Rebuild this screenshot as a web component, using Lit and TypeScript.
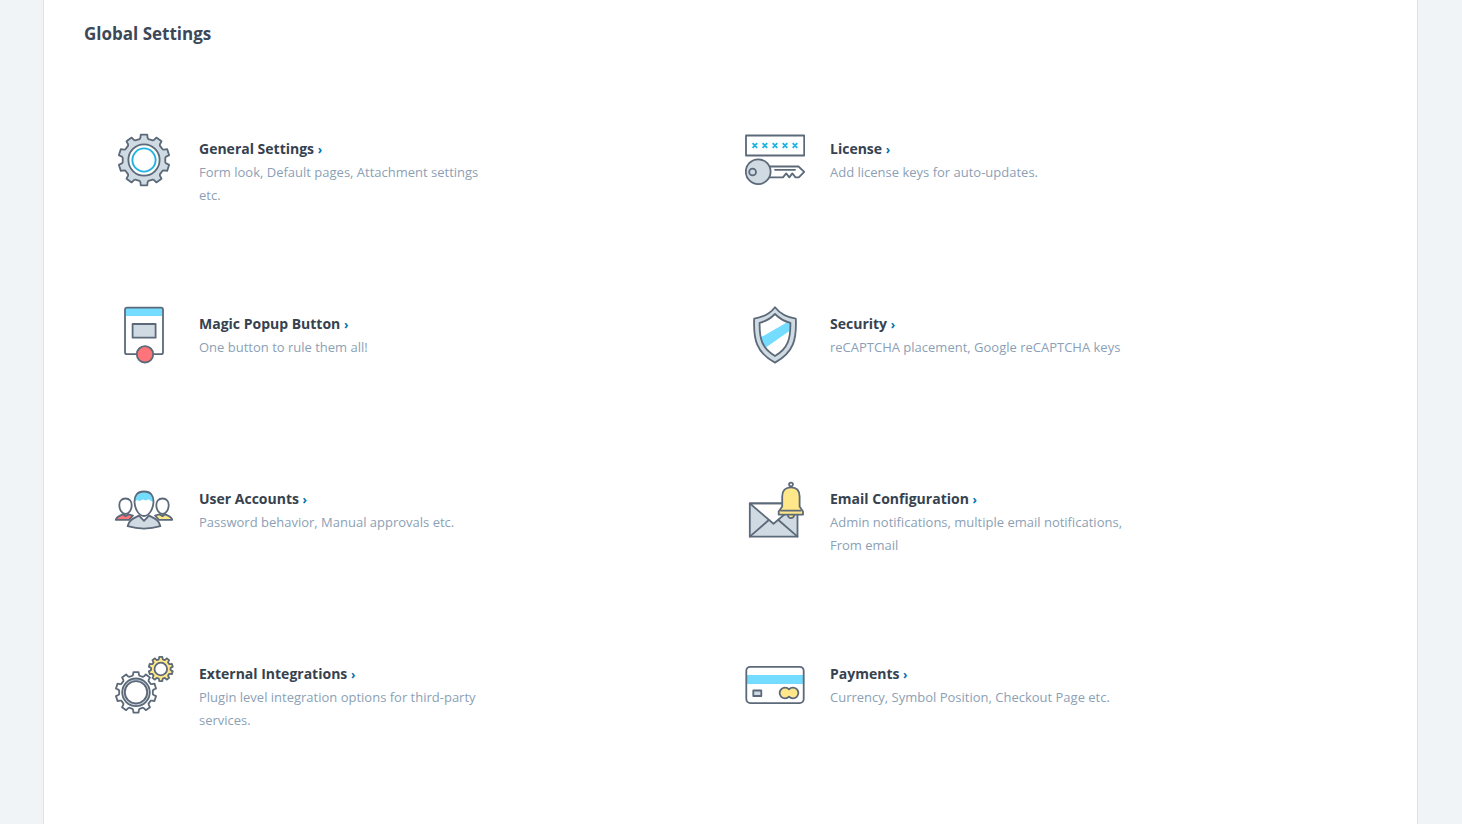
import { LitElement, html, svg, css } from "lit";
import { customElement } from "lit/decorators.js";

/** Outline of a cog with straight-sided teeth. */
function cog(cx: number, cy: number, outer: number, root: number, teeth = 10): string {
  const step = (Math.PI * 2) / teeth;
  const pts: string[] = [];
  for (let i = 0; i < teeth; i++) {
    const a = i * step - Math.PI / 2;
    const corners: [number, number][] = [
      [root, -0.33],
      [root + 1, -0.26],
      [outer, -0.2],
      [outer, 0.2],
      [root + 1, 0.26],
      [root, 0.33],
    ];
    for (const [r, f] of corners) {
      const t = a + f * step;
      pts.push(`${(cx + r * Math.cos(t)).toFixed(2)} ${(cy + r * Math.sin(t)).toFixed(2)}`);
    }
  }
  return `M${pts.join("L")}Z`;
}

const icons = {
  general: svg`
    <path class="ln grey" d=${cog(30, 30, 25.6, 21.4)} />
    <circle class="ln white" cx="30" cy="30" r="15.6" />
    <circle class="cyan-ln" cx="30" cy="30" r="11.6" />`,
  license: svg`
    <path class="ln white" d="M1 5.5H59.2V25.5H1Z" />
    <path class="cyan-ln" d="M7.6 13.2l4.6 4.6m0-4.6l-4.6 4.6M17.6 13.2l4.6 4.6m0-4.6l-4.6 4.6M27.7 13.2l4.6 4.6m0-4.6l-4.6 4.6M37.7 13.2l4.6 4.6m0-4.6l-4.6 4.6M47.7 13.2l4.6 4.6m0-4.6l-4.6 4.6" />
    <path class="ln white" d="M25 36.5H53.5L59.2 41.8L53.8 47.4H50.5L47.3 43.4L44.3 47.4L41.2 43.4L38 47.4H25" />
    <path class="ln" d="M30 39.8H50" />
    <circle class="ln grey" cx="13.2" cy="41.7" r="12.4" />
    <circle class="ln" cx="7.6" cy="42" r="3.4" />`,
  popup: svg`
    <rect class="white" x="11" y="2.6" width="38" height="46.6" rx="2" />
    <path class="cyan" d="M12 3H48V11H12Z" />
    <rect class="ln" x="11" y="2.6" width="38" height="46.6" rx="2" />
    <path class="ln grey" d="M18.6 19H41.6V32.7H18.6Z" />
    <circle class="ln red" cx="31" cy="49.3" r="8.2" />`,
  security: svg`
    <path class="ln grey" d="M30 2.2C25.500 8 18 12.300 9.200 13.600C8.300 34 11 47.500 30 57.600C49 47.500 51.700 34 50.800 13.600C42 12.300 34.500 8 30 2.200Z" />
    <path class="white" d="M30 9C26 13 20.500 16.500 14.600 17.800C14.400 34 17 43.500 30 51C43 43.500 45.600 34 45.400 17.800C39.500 16.500 34 13 30 9Z" />
    <path class="cyan" d="M15.400 32.600L42.500 17L45.400 17.800L45.200 25.500L20.800 42.400C17.500 39 16 36 15.400 32.600Z" />
    <path class="ln" d="M30 9C26 13 20.500 16.500 14.600 17.800C14.400 34 17 43.500 30 51C43 43.500 45.600 34 45.400 17.800C39.500 16.500 34 13 30 9Z" />`,
  users: svg`
    <path class="ln red" d="M1.800 39.800C2.500 36.500 6 35.600 9 34.300L11.500 36.200L14.500 34.300L19 35.500L15 39.800Z" />
    <path class="ln yellow" d="M58.200 39.800C57.500 36.500 54 35.600 51 34.300L48.500 36.200L45.500 34.300L41 35.500L45 39.800Z" />
    <path class="ln white" d="M11.500 18.500C7.300 18.500 5.200 21.500 5.300 25.200C5.400 29.500 8 34 11.500 34S17.600 29.500 17.700 25.200C17.800 21.500 15.700 18.500 11.500 18.500Z" />
    <path class="ln white" d="M48.500 18.500C44.300 18.500 42.200 21.500 42.300 25.200C42.400 29.500 45 34 48.500 34S54.600 29.500 54.700 25.200C54.800 21.500 52.700 18.500 48.500 18.500Z" />
    <path class="ln grey" d="M13.600 46.200C15 39.500 20 38.300 25 35.600L30 40.800L35 35.600C40 38.300 45 39.500 46.400 46.200Q30 51 13.600 46.200Z" />
    <path class="white" d="M30 11.500C23 11.500 20.300 16 20.500 22C20.700 29 25 36 30 36S39.300 29 39.500 22C39.700 16 37 11.500 30 11.500Z" />
    <path class="cyan" d="M30 11.500C24 11.500 20.500 15.500 20.600 21.800L23 20L25.500 21L29 19.600L32 20.400L34.500 19.300L37 21L39.400 22C39.600 15.500 36 11.500 30 11.500Z" />
    <path class="ln" d="M30 11.500C23 11.500 20.300 16 20.500 22C20.700 29 25 36 30 36S39.300 29 39.500 22C39.700 16 37 11.500 30 11.500Z" />`,
  email: svg`
    <path class="grey" d="M4.800 23.400H52.500V56.600H4.800Z" />
    <path class="ln white" d="M4.800 23.400H52.500L28.500 43.800Z" />
    <path class="ln" d="M4.800 56.600L23.800 40M52.500 56.600L33.400 40" />
    <path class="ln" d="M4.800 23.400H52.500V56.600H4.800Z" />
    <path class="ln yellow" d="M42.800 34.500a3.200 3.700 0 0 0 6.400 0" />
    <circle class="ln white" cx="46" cy="4.600" r="1.900" />
    <path class="ln yellow" d="M33.700 34.600V31.600L37.200 26.500V16.500C37.200 10.500 40.500 7.300 46 7.300S54.600 10.500 54.600 16.500V26.500L58 31.600V34.600Z" />
    <path class="ln" d="M36 30.700H55.500" />`,
  external: svg`
    <path class="ln white" d=${cog(22, 37.300, 20.400, 16.900)} />
    <circle class="ln grey" cx="22" cy="37.300" r="13.800" />
    <circle class="ln white" cx="22" cy="37.300" r="11.200" />
    <path class="ln yellow" d=${cog(46.800, 14, 12.200, 9.800)} />
    <circle class="ln white" cx="46.800" cy="14" r="6.300" />`,
  payments: svg`
    <rect class="white" x="1.300" y="11.800" width="57.400" height="36.300" rx="4" />
    <path class="cyan" d="M2 20H58V29H2Z" />
    <rect class="ln" x="1.300" y="11.800" width="57.400" height="36.300" rx="4" />
    <path class="ln grey" d="M8.300 35.500H16.300V41H8.300Z" />
    <path class="ln yellow" d="M44 34.300a5.400 5.400 0 1 0 0 7.400a5.400 5.400 0 1 0 0 -7.400Z" />`,
};

const settings = [
  { icon: icons.general, title: "General Settings", text: "Form look, Default pages, Attachment settings etc." },
  { icon: icons.license, title: "License", text: "Add license keys for auto-updates." },
  { icon: icons.popup, title: "Magic Popup Button", text: "One button to rule them all!" },
  { icon: icons.security, title: "Security", text: "reCAPTCHA placement, Google reCAPTCHA keys" },
  { icon: icons.users, title: "User Accounts", text: "Password behavior, Manual approvals etc." },
  { icon: icons.email, title: "Email Configuration", text: "Admin notifications, multiple email notifications, From email" },
  { icon: icons.external, title: "External Integrations", text: "Plugin level integration options for third-party services." },
  { icon: icons.payments, title: "Payments", text: "Currency, Symbol Position, Checkout Page etc." },
];

@customElement("app-root")
export class AppRoot extends LitElement {
  static styles = css`
    :host {
      display: block;
      min-height: 100vh;
      box-sizing: border-box;
      padding: 0 44px 0 43px;
      background: #f0f4f7;
      font-family: "Segoe UI", "Open Sans", "Noto Sans", sans-serif;
    }
    .panel {
      box-sizing: border-box;
      min-height: 100vh;
      padding: 20px 40px 0;
      background: #fff;
      border: solid #dfe3e8;
      border-width: 0 1px;
    }
    .heading {
      margin: 0;
      font-size: 17px;
      line-height: 28px;
      font-weight: 700;
      color: #3c4858;
    }
    .grid {
      display: grid;
      grid-template-columns: 1fr 1fr;
      grid-auto-rows: 175px;
      padding: 82px 1px 0 30px;
    }
    .item {
      display: flex;
      align-items: flex-start;
      gap: 25px;
      text-decoration: none;
    }
    .icon {
      flex: none;
      width: 60px;
      height: 60px;
    }
    .copy {
      max-width: 300px;
      padding-top: 7px;
    }
    .title {
      display: block;
      font-size: 14px;
      line-height: 24px;
      font-weight: 700;
      color: #36424f;
    }
    .chevron {
      font-size: 12px;
      line-height: 1;
      color: #0073aa;
    }
    .text {
      display: block;
      font-size: 13px;
      line-height: 23px;
      color: #8c9fb5;
    }
    .ln {
      fill: none;
      stroke: #5b6979;
      stroke-width: 1.8;
      stroke-linejoin: round;
      stroke-linecap: round;
    }
    .grey { fill: #d0dae3; }
    .white { fill: #fff; }
    .cyan { fill: #74dcff; }
    .red { fill: #ff7479; }
    .yellow { fill: #ffe78a; }
    .cyan-ln {
      fill: none;
      stroke: #21b4e2;
      stroke-width: 1.9;
    }
  `;

  render() {
    return html`
      <main class="panel">
        <h1 class="heading">Global Settings</h1>
        <div class="grid">
          ${settings.map(
            (s) => html`
              <a class="item" href="#">
                <svg class="icon" viewBox="0 0 60 60" aria-hidden="true">${s.icon}</svg>
                <span class="copy">
                  <span class="title">${s.title} <span class="chevron">›</span></span>
                  <span class="text">${s.text}</span>
                </span>
              </a>
            `
          )}
        </div>
      </main>
    `;
  }
}
